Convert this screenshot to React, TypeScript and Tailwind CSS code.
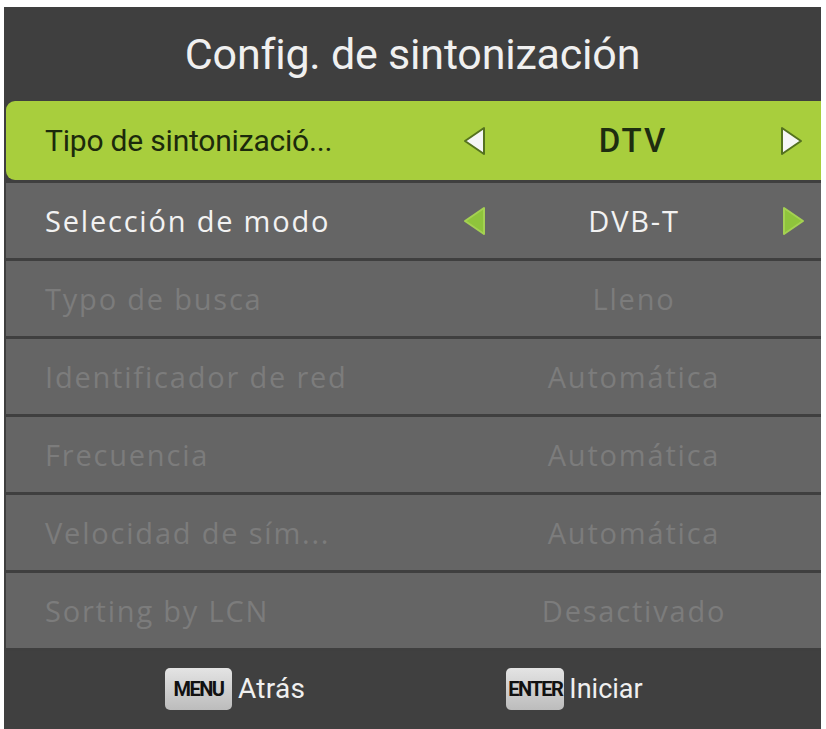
import React from "react";

type Row = { label: string; value: string; state: "active" | "normal" | "disabled" };

const rows: Row[] = [
  { label: "Tipo de sintonizació...", value: "DTV", state: "active" },
  { label: "Selección de modo", value: "DVB-T", state: "normal" },
  { label: "Typo de busca", value: "Lleno", state: "disabled" },
  { label: "Identificador de red", value: "Automática", state: "disabled" },
  { label: "Frecuencia", value: "Automática", state: "disabled" },
  { label: "Velocidad de sím...", value: "Automática", state: "disabled" },
  { label: "Sorting by LCN", value: "Desactivado", state: "disabled" },
];

const narrow = { fontFamily: 'Roboto, "Liberation Sans", sans-serif' };
const wide = { fontFamily: '"Open Sans", "DejaVu Sans", sans-serif' };

function Arrow({ dir, active }: { dir: "left" | "right"; active: boolean }) {
  const pts = dir === "left" ? "21,2 21,28 2,15" : "3,2 3,28 22,15";
  return (
    <svg className="shrink-0" width="24" height="30" viewBox="0 0 24 30">
      <polygon
        points={pts}
        fill={active ? "#f6f6f6" : "#8fc43c"}
        stroke={active ? "#55721f" : "#a4d152"}
        strokeWidth="2"
        strokeLinejoin="round"
      />
    </svg>
  );
}

function Key({ label, width }: { label: string; width: string }) {
  return (
    <span
      className={`inline-flex h-[42px] shrink-0 items-center justify-center rounded-[5px] bg-gradient-to-b from-[#e4e4e4] to-[#bcbcbc] text-[20px] font-bold tracking-[-1.5px] text-[#111] ${width}`}
      style={narrow}
    >
      {label}
    </span>
  );
}

function MenuRow({ row }: { row: Row }) {
  if (row.state === "active") {
    return (
      <div className="flex h-[79px] items-center rounded-l-[9px] bg-[#a8ce3d] pl-[39px] pr-[18px]">
        <span className="flex-1 text-[30px] tracking-[-0.2px] text-[#1c2a0c]" style={narrow}>
          {row.label}
        </span>
        <div className="flex w-[340px] items-center">
          <Arrow dir="left" active />
          <span className="flex-1 text-center text-[33px] font-medium tracking-[2px] text-[#1e2d10]" style={narrow}>
            {row.value}
          </span>
          <Arrow dir="right" active />
        </div>
      </div>
    );
  }
  const dim = row.state === "disabled";
  return (
    <div className="flex h-[75px] items-center bg-[#656565] pl-[39px] pr-[16px]">
      <span
        className={`flex-1 text-[29px] tracking-[1.8px] ${dim ? "text-[#7c7c7c]" : "text-[#f2f2f2]"}`}
        style={wide}
      >
        {row.label}
      </span>
      <div className="flex w-[342px] items-center">
        {dim ? <span className="w-[24px]" /> : <Arrow dir="left" active={false} />}
        <span
          className={`flex-1 text-center text-[29px] tracking-[1.8px] ${dim ? "text-[#7c7c7c]" : "text-[#f2f2f2]"}`}
          style={wide}
        >
          {row.value}
        </span>
        {dim ? <span className="w-[24px]" /> : <Arrow dir="right" active={false} />}
      </div>
    </div>
  );
}

export default function App() {
  return (
    <div className="h-[729px] w-[826px] overflow-hidden bg-white pl-[4px] pr-[5px] pt-[7px]">
      <div className="flex h-full flex-col bg-[#3f3f3f]">
        <div className="flex h-[94px] items-center justify-center">
          <h1 className="text-[43px] tracking-[-0.2px] text-[#f0f0f0]" style={narrow}>
            Config. de sintonización
          </h1>
        </div>
        <div className="flex flex-col gap-[3px] pl-[2px]">
          {rows.map((r) => (
            <MenuRow key={r.label} row={r} />
          ))}
        </div>
        <div className="mt-[3px] flex flex-1 items-center bg-[#404040] pb-[2px] pl-[161px]">
          <div className="flex items-center gap-[6px]">
            <Key label="MENU" width="w-[67px]" />
            <span className="text-[28px] tracking-[0.3px] text-[#f0f0f0]" style={narrow}>
              Atrás
            </span>
          </div>
          <div className="ml-[201px] flex items-center gap-[5px]">
            <Key label="ENTER" width="w-[58px]" />
            <span className="text-[27px] text-[#f0f0f0]" style={narrow}>
              Iniciar
            </span>
          </div>
        </div>
      </div>
    </div>
  );
}
